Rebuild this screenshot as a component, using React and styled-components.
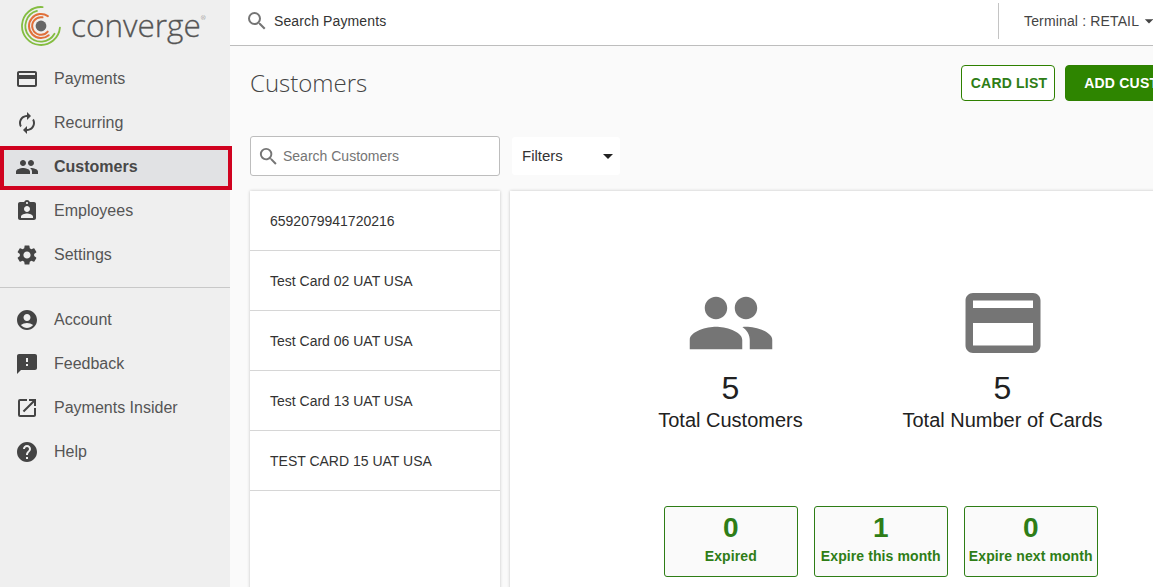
import React from 'react'
import styled, { createGlobalStyle } from 'styled-components'
import {
  MdCreditCard,
  MdAutorenew,
  MdPeople,
  MdAssignmentInd,
  MdSettings,
  MdAccountCircle,
  MdFeedback,
  MdOpenInNew,
  MdHelp,
  MdSearch,
  MdArrowDropDown,
} from 'react-icons/md'

const GlobalStyle = createGlobalStyle`
  html, body {
    margin: 0;
    height: 100%;
    overflow: hidden;
  }
  body {
    font-family: "Liberation Sans", Arial, sans-serif;
    color: #212121;
  }
  #root {
    height: 100%;
  }
`

const Page = styled.div`
  display: flex;
  height: 587px;
  width: 1153px;
  overflow: hidden;
`

const Sidebar = styled.aside`
  width: 230px;
  flex: none;
  background: #efefef;
  position: relative;
  z-index: 2;
`

const Brand = styled.div`
  height: 57px;
  display: flex;
  align-items: flex-start;
  padding: 6px 0 0 21px;
  gap: 10px;
  box-sizing: border-box;
`

const BrandName = styled.span`
  font-family: "Open Sans", sans-serif;
  font-weight: 300;
  font-size: 31.5px;
  -webkit-text-stroke: 0.3px #555;
  color: #555;
  line-height: 38px;
  sup {
    font-size: 6px;
    line-height: 1;
    vertical-align: top;
    position: relative;
    top: 9px;
    -webkit-text-stroke: 0;
  }
`

const NavList = styled.nav`
  display: flex;
  flex-direction: column;
`

const NavItem = styled.a`
  height: 44px;
  box-sizing: border-box;
  display: flex;
  align-items: center;
  gap: 15px;
  padding-left: 15px;
  font-size: 16px;
  color: #555;
  font-weight: ${(p) => (p.$active ? 700 : 400)};
  svg {
    font-size: 24px;
    color: #444;
    flex: none;
  }
  ${(p) =>
    p.$active &&
    `
    width: 232px;
    margin: 1px 0 -1px;
    padding: 0 0 2px 11px;
    background: #e1e2e4;
    border: 4px solid #d0021f;
    color: #484848;
  `}
`

const NavDivider = styled.hr`
  border: 0;
  border-top: 1px solid #c8c8c8;
  margin: 10px 0;
`

const Main = styled.div`
  flex: 1;
  min-width: 0;
  display: flex;
  flex-direction: column;
  background: #fafafa;
`

const TopBar = styled.header`
  height: 46px;
  flex: none;
  box-sizing: border-box;
  background: #fff;
  border-bottom: 1px solid #bdbdbd;
  display: flex;
  align-items: flex-start;
  padding-left: 15px;
`

const TopSearch = styled.div`
  flex: 1;
  height: 42px;
  display: flex;
  align-items: center;
  gap: 5px;
  font-size: 14px;
  letter-spacing: 0.12px;
  color: #333;
  svg {
    font-size: 24px;
    color: #757575;
  }
`

const Terminal = styled.div`
  width: 155px;
  height: 36px;
  margin-top: 3px;
  box-sizing: border-box;
  border-left: 1px solid #c4c4c4;
  padding-left: 25px;
  display: flex;
  align-items: center;
  white-space: nowrap;
  font-size: 14px;
  letter-spacing: 0.15px;
  color: #444;
  svg {
    font-size: 20px;
    flex: none;
    margin-left: 0;
  }
`

const Content = styled.div`
  width: 968px;
  padding: 0 0 0 20px;
`

const TitleRow = styled.div`
  display: flex;
  align-items: center;
  justify-content: space-between;
  height: 36px;
  margin-top: 19px;
`

const Title = styled.h1`
  margin: 0 0 2px;
  font-family: "Open Sans", sans-serif;
  font-weight: 300;
  font-size: 24px;
  color: #444;
`

const Actions = styled.div`
  display: flex;
  gap: 10px;
`

const Button = styled.button`
  height: 36px;
  box-sizing: border-box;
  border-radius: 4px;
  border: 1px solid #2e8000;
  background: ${(p) => (p.$primary ? '#2e8500' : '#fff')};
  color: ${(p) => (p.$primary ? '#fff' : '#2e7d16')};
  font-family: inherit;
  font-size: 14px;
  font-weight: 700;
  letter-spacing: 0.2px;
  padding: 0 0 0 2px;
  width: ${(p) => p.$width}px;
`

const FilterRow = styled.div`
  display: flex;
  align-items: center;
  gap: 12px;
  margin-top: 35px;
  height: 40px;
`

const SearchBox = styled.div`
  width: 250px;
  height: 40px;
  box-sizing: border-box;
  background: #fff;
  border: 1px solid #bdbdbd;
  border-radius: 3px;
  display: flex;
  align-items: center;
  gap: 3px;
  padding-left: 6px;
  font-size: 14px;
  color: #757575;
  svg {
    font-size: 23px;
    color: #757575;
  }
`

const FilterSelect = styled.div`
  width: 108px;
  height: 38px;
  box-sizing: border-box;
  background: #fff;
  border-radius: 3px;
  padding: 0 0 1px 10px;
  display: flex;
  align-items: center;
  justify-content: space-between;
  font-size: 15px;
  color: #333;
  svg {
    font-size: 24px;
    color: #222;
  }
`

const Columns = styled.div`
  display: flex;
  gap: 10px;
  margin-top: 15px;
`

const CustomerList = styled.ul`
  list-style: none;
  margin: 0;
  padding: 0;
  width: 250px;
  height: 400px;
  flex: none;
  background: #fff;
  box-shadow: 0 0 3px rgba(0, 0, 0, 0.22);
`

const CustomerRow = styled.li`
  height: 60px;
  box-sizing: border-box;
  border-bottom: 1px solid #d6d6d6;
  padding-left: 20px;
  display: flex;
  align-items: center;
  font-size: 14px;
  color: #333;
`

const SummaryPanel = styled.section`
  flex: 1;
  height: 400px;
  background: #fff;
  box-shadow: 0 0 3px rgba(0, 0, 0, 0.22);
`

const StatRow = styled.div`
  display: flex;
  padding: 87px 0 0 84.5px;
`

const Stat = styled.div`
  width: 272px;
  display: flex;
  flex-direction: column;
  align-items: center;
  svg {
    font-size: 90px;
    color: #757575;
    display: block;
  }
`

const StatValue = styled.div`
  font-size: 32px;
  line-height: 36px;
  margin-top: 2px;
`

const StatLabel = styled.div`
  font-size: 20px;
  line-height: 28px;
`

const ExpiryRow = styled.div`
  display: flex;
  gap: 16.4px;
  padding: 72px 0 0 154px;
`

const ExpiryCard = styled.div`
  width: 133.6px;
  height: 71px;
  box-sizing: border-box;
  border: 1px solid #2e7d16;
  border-radius: 3px;
  background: #fafafa;
  color: #2e7d16;
  font-weight: 700;
  text-align: center;
  white-space: nowrap;
`

const ExpiryValue = styled.div`
  font-size: 28px;
  line-height: 32px;
  margin-top: 5px;
`

const ExpiryLabel = styled.div`
  font-size: 14px;
  line-height: 18px;
  margin-top: 3px;
  letter-spacing: 0.1px;
`

// angles in degrees, clockwise from 12 o'clock, drawn from start to end
const arc = (r, start, end) => {
  const point = (a) => {
    const rad = (a * Math.PI) / 180
    return `${(20 + r * Math.sin(rad)).toFixed(2)} ${(20 - r * Math.cos(rad)).toFixed(2)}`
  }
  const large = end - start > 180 ? 1 : 0
  return `M${point(start)}A${r} ${r} 0 ${large} 1 ${point(end)}`
}

const Logo = () => (
  <svg width="40" height="40" viewBox="0 0 40 40" fill="none">
    <circle cx="20" cy="20" r="5.4" fill="#666" />
    <g stroke="#e0703a" strokeWidth="2" strokeLinecap="round">
      <path d={arc(12, 140, 395)} />
      <path d={arc(8.8, 130, 370)} />
    </g>
    <g stroke="#84bd41" strokeWidth="1.8" strokeLinecap="round">
      <path d={arc(19, 95, 365)} />
      <path d={arc(15.6, 120, 345)} />
    </g>
  </svg>
)

const topNav = [
  { label: 'Payments', icon: MdCreditCard },
  { label: 'Recurring', icon: MdAutorenew },
  { label: 'Customers', icon: MdPeople, active: true },
  { label: 'Employees', icon: MdAssignmentInd },
  { label: 'Settings', icon: MdSettings },
]

const bottomNav = [
  { label: 'Account', icon: MdAccountCircle },
  { label: 'Feedback', icon: MdFeedback },
  { label: 'Payments Insider', icon: MdOpenInNew },
  { label: 'Help', icon: MdHelp },
]

const customers = [
  '6592079941720216',
  'Test Card 02 UAT USA',
  'Test Card 06 UAT USA',
  'Test Card 13 UAT USA',
  'TEST CARD 15 UAT USA',
]

const expiry = [
  { value: 0, label: 'Expired' },
  { value: 1, label: 'Expire this month' },
  { value: 0, label: 'Expire next month' },
]

const renderNav = (items) =>
  items.map(({ label, icon: Icon, active }) => (
    <NavItem key={label} $active={active}>
      <Icon />
      {label}
    </NavItem>
  ))

const App = () => {
  return (
    <Page>
      <GlobalStyle />
      <Sidebar>
        <Brand>
          <Logo />
          <BrandName>
            converge<sup>®</sup>
          </BrandName>
        </Brand>
        <NavList>{renderNav(topNav)}</NavList>
        <NavDivider />
        <NavList>{renderNav(bottomNav)}</NavList>
      </Sidebar>
      <Main>
        <TopBar>
          <TopSearch>
            <MdSearch />
            Search Payments
          </TopSearch>
          <Terminal>
            Terminal : RETAIL
            <MdArrowDropDown />
          </Terminal>
        </TopBar>
        <Content>
          <TitleRow>
            <Title>Customers</Title>
            <Actions>
              <Button $width={94}>CARD LIST</Button>
              <Button $primary $width={153}>ADD CUSTOMER</Button>
            </Actions>
          </TitleRow>
          <FilterRow>
            <SearchBox>
              <MdSearch />
              Search Customers
            </SearchBox>
            <FilterSelect>
              Filters
              <MdArrowDropDown />
            </FilterSelect>
          </FilterRow>
          <Columns>
            <CustomerList>
              {customers.map((name) => (
                <CustomerRow key={name}>{name}</CustomerRow>
              ))}
            </CustomerList>
            <SummaryPanel>
              <StatRow>
                <Stat>
                  <MdPeople />
                  <StatValue>5</StatValue>
                  <StatLabel>Total Customers</StatLabel>
                </Stat>
                <Stat>
                  <MdCreditCard />
                  <StatValue>5</StatValue>
                  <StatLabel>Total Number of Cards</StatLabel>
                </Stat>
              </StatRow>
              <ExpiryRow>
                {expiry.map((item) => (
                  <ExpiryCard key={item.label}>
                    <ExpiryValue>{item.value}</ExpiryValue>
                    <ExpiryLabel>{item.label}</ExpiryLabel>
                  </ExpiryCard>
                ))}
              </ExpiryRow>
            </SummaryPanel>
          </Columns>
        </Content>
      </Main>
    </Page>
  )
}

export default App
